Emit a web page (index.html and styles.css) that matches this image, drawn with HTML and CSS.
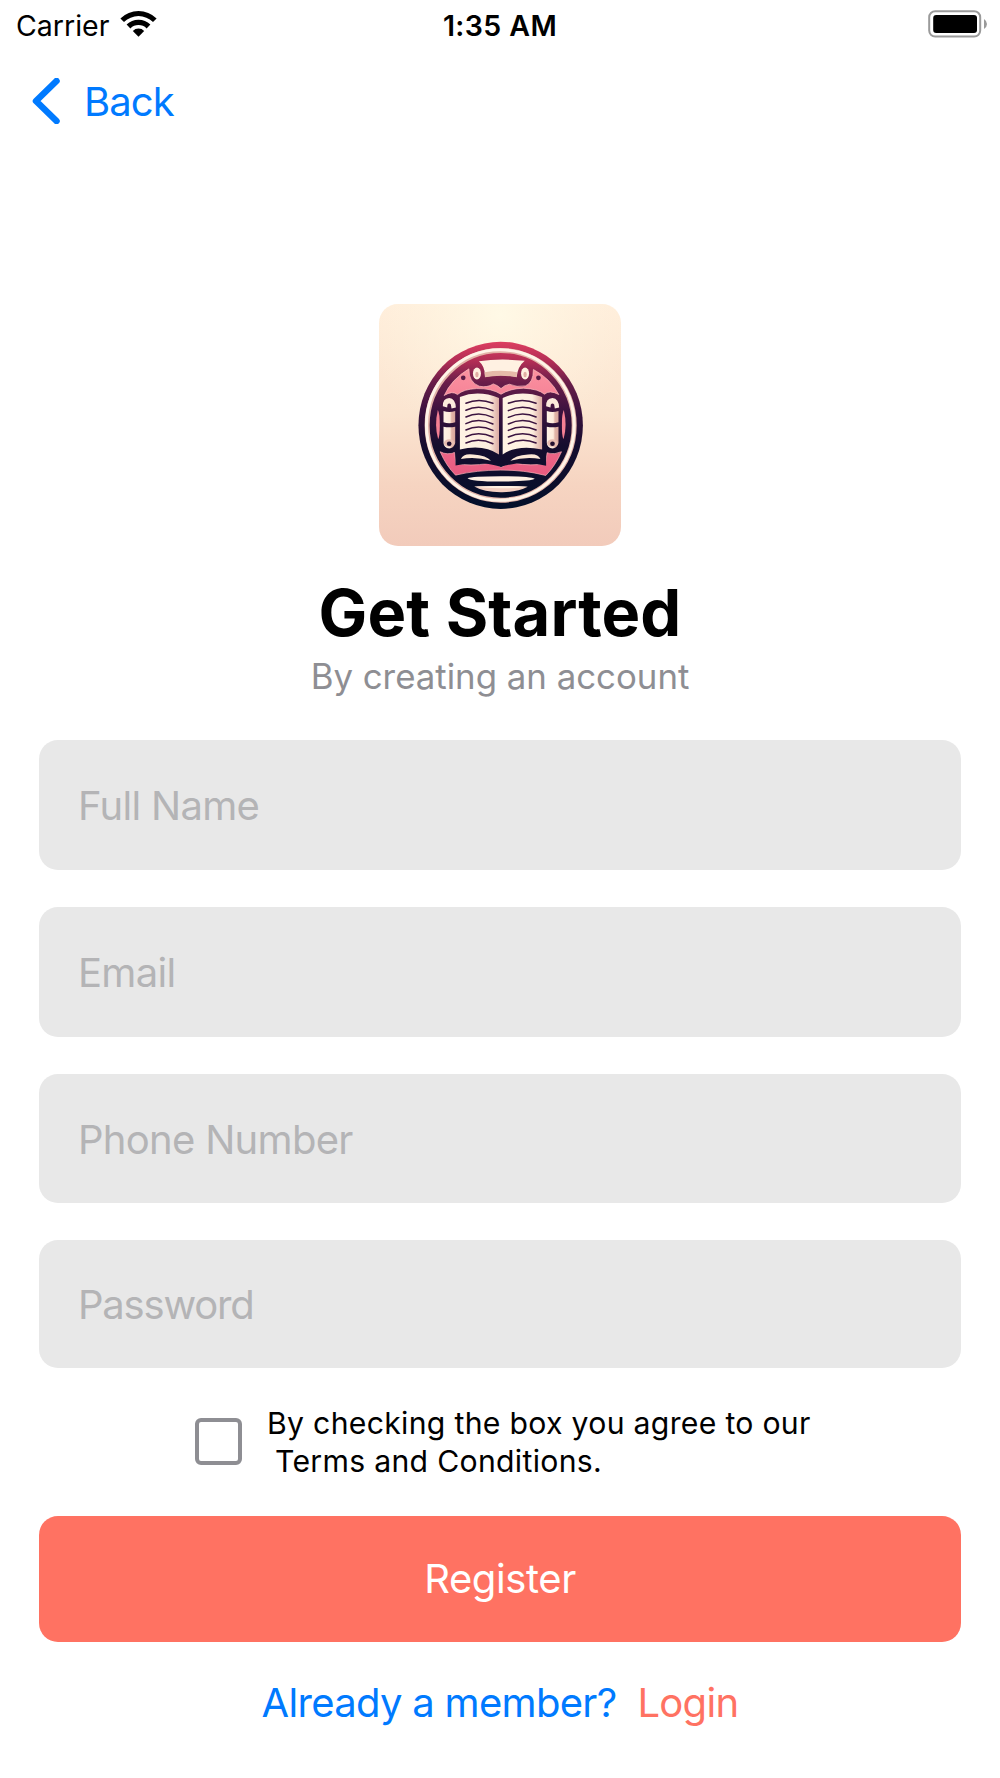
FILE: index.html
```
<!DOCTYPE html>
<html lang="en">
<head>
    <meta charset="UTF-8">
    <meta name="viewport" content="width=device-width, initial-scale=1.0">
    <title>Get Started</title>
    <link rel="stylesheet" href="styles.css">
</head>
<body>
    <div class="status-bar">
        <div class="status-left">
            <span class="carrier">Carrier</span>
            <svg class="wifi" viewBox="0 0 37 27">
                <path d="M0.4 8.4 A26 26 0 0 1 36.6 8.4 L33 12 A20.8 20.8 0 0 0 4 12 Z"/>
                <path d="M6.6 14.6 A17 17 0 0 1 30.4 14.6 L26.6 18.4 A11.6 11.6 0 0 0 10.4 18.4 Z"/>
                <path d="M12.8 21 A8 8 0 0 1 24.2 21 L18.5 26.8 Z"/>
            </svg>
        </div>
        <span class="time">1:35 AM</span>
        <svg class="battery" viewBox="0 0 60 28">
            <rect x="1.2" y="1.2" width="51" height="25.4" rx="6" fill="none" stroke="#9a9a9a" stroke-width="2"/>
            <rect x="5.2" y="5" width="43.8" height="18" rx="3" fill="#000"/>
            <path d="M56 9 Q59 11 59 14 Q59 17 56 19 Z" fill="#9a9a9a"/>
        </svg>
    </div>

    <div class="nav-bar">
        <svg class="chevron" viewBox="0 0 28 46">
            <path d="M24.5 3 L4 23 L24.5 43" fill="none" stroke="#007aff" stroke-width="6.5" stroke-linecap="round" stroke-linejoin="round"/>
        </svg>
        <a class="back">Back</a>
    </div>

    <div class="header">
        <svg class="logo" viewBox="28 28 724 724">
            <defs>
                <linearGradient id="paper" x1="0" y1="0" x2="0" y2="1">
                    <stop offset="0" stop-color="#ffeedb"/>
                    <stop offset="0.45" stop-color="#fbe5d1"/>
                    <stop offset="0.75" stop-color="#f6d4c1"/>
                    <stop offset="1" stop-color="#f2cbbb"/>
                </linearGradient>
                <radialGradient id="glow" gradientUnits="userSpaceOnUse" cx="390" cy="60" r="400">
                    <stop offset="0" stop-color="#fff9e6"/>
                    <stop offset="1" stop-color="#fff3df" stop-opacity="0"/>
                </radialGradient>
                <linearGradient id="ink" gradientUnits="userSpaceOnUse" x1="0" y1="142" x2="0" y2="640">
                    <stop offset="0" stop-color="#dc3e60"/>
                    <stop offset="0.12" stop-color="#b02d55"/>
                    <stop offset="0.24" stop-color="#6a1d4a"/>
                    <stop offset="0.42" stop-color="#3a123e"/>
                    <stop offset="0.62" stop-color="#160d2e"/>
                    <stop offset="1" stop-color="#030f2a"/>
                </linearGradient>
                <linearGradient id="pink" gradientUnits="userSpaceOnUse" x1="0" y1="220" x2="0" y2="540">
                    <stop offset="0" stop-color="#fb92a0"/>
                    <stop offset="1" stop-color="#e85a80"/>
                </linearGradient>
                <linearGradient id="page" x1="0" y1="0" x2="1" y2="0">
                    <stop offset="0" stop-color="#fff3e4"/>
                    <stop offset="0.75" stop-color="#fdeedf"/>
                    <stop offset="1" stop-color="#dcaaa2"/>
                </linearGradient>
                <linearGradient id="roll" x1="0" y1="0" x2="1" y2="0">
                    <stop offset="0" stop-color="#fff3e6"/>
                    <stop offset="0.55" stop-color="#fdebdc"/>
                    <stop offset="0.7" stop-color="#e2b5a8"/>
                    <stop offset="1" stop-color="#d9a59c"/>
                </linearGradient>
            </defs>
            <rect x="28" y="28" width="724" height="724" fill="url(#paper)"/>
            <rect x="28" y="28" width="724" height="724" fill="url(#glow)"/>

            <!-- badge rings -->
            <ellipse cx="392" cy="391" rx="246" ry="250" fill="url(#ink)"/>
            <ellipse cx="392" cy="391" rx="220" ry="224" fill="none" stroke="#e3b3a8" stroke-width="15"/>
            <ellipse cx="391" cy="390" rx="221" ry="225" fill="none" stroke="#fff4e8" stroke-width="9"/>

            <!-- pink field -->
            <path d="M223 302 Q244 254 297 222 Q296 262 328 274 Q352 279 370 267 Q383 271 393 281 Q404 270 418 268 Q440 278 466 273 Q490 264 490 224 Q540 250 566 299 Q538 284 523 298 Q505 282 460 280 Q420 281 393 298 Q365 280 320 281 Q280 283 263 299 Q247 286 223 302 Z" fill="url(#pink)" stroke="#ffc3c2" stroke-width="2"/>
            <path d="M204 345 Q193 391 205 433 Q210 425 210 391 Q210 355 204 345 Z" fill="#f47f93"/>
            <path d="M581 345 Q592 391 580 433 Q575 425 575 391 Q575 355 581 345 Z" fill="#f47f93"/>
            <path d="M211 470 Q232 481 254 472 L258 505 Q300 514 355 505 Q380 506 393 517 Q406 506 430 504 Q485 514 526 505 L531 473 Q553 480 574 470 Q555 513 527 541 Q460 524 392 525 Q320 525 257 540 Q229 512 211 470 Z" fill="url(#pink)" stroke="#ffb3b9" stroke-width="2"/>
            <circle cx="280" cy="249" r="7" fill="#5a1a45"/>
            <circle cx="505" cy="249" r="7" fill="#5a1a45"/>

            <!-- top scroll -->
            <path d="M327 199 Q392 190 464 198 Q443 215 440 246 Q392 237 345 246 Q346 215 327 199 Z" fill="#fff1e2"/>
            <path d="M344 232 Q392 224 441 232 L440 247 Q392 238 345 247 Z" fill="#e6baa9"/>
            <ellipse cx="321" cy="236" rx="12" ry="18" fill="#fff0e0"/>
            <ellipse cx="465" cy="236" rx="12" ry="18" fill="#fff0e0"/>
            <ellipse cx="321" cy="239" rx="5" ry="8" fill="#e2ada3"/>
            <ellipse cx="465" cy="239" rx="5" ry="8" fill="#e2ada3"/>

            <!-- open book -->
            <path d="M257 306 Q320 276 393 306 Q470 276 527 306 L528 512 Q460 494 393 515 Q325 494 257 511 Z" fill="url(#ink)"/>
            <path d="M270 306 Q325 284 387 309 L387 478 Q340 446 270 463 Z" fill="url(#page)"/>
            <path d="M398 309 Q452 284 516 306 L516 463 Q440 448 398 478 Z" fill="url(#page)"/>
            <path d="M273 492 Q280 474 310 478 Q350 481 363 497 Q316 484 273 492 Z" fill="#fde8d7"/>
            <path d="M511 492 Q504 474 474 478 Q434 481 421 497 Q468 484 511 492 Z" fill="#fde8d7"/>
            <g fill="none" stroke="#3b1440" stroke-width="4.5" stroke-linecap="round">
                <path d="M288 325 Q326 308 369 325"/>
                <path d="M288 346 Q326 327 369 347"/>
                <path d="M288 366 Q326 347 369 367"/>
                <path d="M288 386 Q326 367 369 387"/>
                <path d="M288 405 Q326 387 369 406"/>
                <path d="M288 425 Q326 407 369 426"/>
                <path d="M288 444 Q326 427 369 446"/>
                <path d="M415 325 Q457 308 498 325"/>
                <path d="M415 347 Q457 327 498 346"/>
                <path d="M415 367 Q457 347 498 366"/>
                <path d="M415 387 Q457 367 498 386"/>
                <path d="M415 406 Q457 387 498 405"/>
                <path d="M415 426 Q457 407 498 425"/>
                <path d="M415 446 Q457 427 498 444"/>
            </g>

            <!-- side scrolls -->
            <g id="side-scroll">
                <path d="M211 330 Q209 301 238 300 Q264 301 266 326 L264 452 Q260 473 238 474 Q214 473 211 450 Z" fill="url(#ink)"/>
                <path d="M219 334 Q218 310 238 309 Q257 311 258 338 L245 341 L243 329 Q238 323 233 329 L232 338 Z" fill="#fdebdc"/>
                <path d="M221 348 Q238 354 256 348 L256 382 Q238 387 221 382 Z" fill="url(#roll)"/>
                <path d="M221 395 Q238 399 256 395 L256 444 Q252 460 238 460 Q222 459 221 444 Z" fill="url(#roll)"/>
                <ellipse cx="238" cy="444" rx="16" ry="11" fill="#e8bdb1"/>
                <circle cx="238" cy="446" r="7" fill="#23102f"/>
            </g>
            <use href="#side-scroll" x="309"/>

            <!-- base lines -->
            <path d="M293 549 Q305 543 392 543 Q482 543 494 551 Q484 559 392 559 Q302 559 293 549 Z" fill="#fff0e2"/>
            <path d="M313 574 Q392 570 473 575 Q440 592 392 591 Q342 591 313 574 Z" fill="#f4cfc1"/>
            <path d="M313 574 Q392 570 473 575 Q440 580 392 579 Q342 579 313 574 Z" fill="#fff0e2"/>
        </svg>
        <h1 class="title">Get Started</h1>
        <p class="subtitle">By creating an account</p>
    </div>

    <form class="form">
        <input class="field" type="text" placeholder="Full Name">
        <input class="field" type="email" placeholder="Email">
        <input class="field" type="tel" placeholder="Phone Number">
        <input class="field field-password" type="password" placeholder="Password">

        <label class="terms">
            <input class="checkbox" type="checkbox">
            <span class="terms-text">By checking the box you agree to our<br><span class="terms-link">Terms and Conditions.</span></span>
        </label>

        <button class="register" type="button">Register</button>
    </form>

    <div class="footer">
        <span class="member">Already a member?</span>
        <a class="login">Login</a>
    </div>
</body>
</html>
```

FILE: styles.css
```
* {
    box-sizing: border-box;
}
body {
    font-family: Inter, "Liberation Sans", sans-serif;
    margin: 0;
    padding: 0;
    height: 1778px;
    overflow: hidden;
    background-color: #fff;
    color: #000;
}
.status-bar {
    display: grid;
    grid-template-columns: 1fr auto 1fr;
    align-items: center;
    height: 50px;
    padding: 0 12px;
    font-size: 28.5px;
}
.status-left {
    display: flex;
    align-items: center;
    gap: 11px;
    padding-left: 4px;
}
.wifi {
    width: 37px;
    height: 27px;
    margin-bottom: 4px;
}
.time {
    font-weight: 600;
    letter-spacing: 0.4px;
}
.battery {
    justify-self: end;
    width: 60px;
    height: 28px;
    margin-bottom: 2px;
}
.nav-bar {
    display: flex;
    align-items: center;
    height: 102px;
    padding-left: 32px;
    gap: 24px;
}
.chevron {
    width: 28px;
    height: 46px;
}
.back {
    font-size: 40px;
    letter-spacing: -0.9px;
    color: #007aff;
}
.header {
    display: flex;
    flex-direction: column;
    align-items: center;
    padding-top: 152px;
}
.logo {
    width: 242px;
    height: 242px;
    border-radius: 19px;
}
.title {
    margin: 27px 0 0;
    font-size: 65px;
    font-weight: 700;
    line-height: 80px;
    letter-spacing: 0.1px;
}
.subtitle {
    margin: 2px 0 0;
    font-size: 34.8px;
    line-height: 42px;
    color: #8e8e93;
}
.form {
    display: flex;
    flex-direction: column;
    gap: 36.9px;
    margin-top: 43px;
    padding: 0 39px;
}
.field {
    width: 100%;
    height: 129.9px;
    padding: 1px 39px 0;
    border: none;
    border-radius: 19px;
    background-color: #e8e8e8;
    font-family: inherit;
    font-size: 40px;
    letter-spacing: -0.7px;
}
.field::placeholder {
    color: #b4b4b6;
}
.field-password {
    height: 127.6px;
    padding-top: 0;
    letter-spacing: -1.2px;
}
.terms {
    display: flex;
    align-items: center;
    gap: 25px;
    height: 74px;
    padding-left: 156px;
}
.checkbox {
    appearance: none;
    width: 47px;
    height: 47px;
    margin: 0;
    border: 4px solid #8e8e93;
    border-radius: 6px;
}
.terms-text {
    font-size: 30.2px;
    line-height: 38px;
    letter-spacing: 0.3px;
}
.terms-link {
    margin-left: 8px;
}
.register {
    height: 126.5px;
    border: none;
    border-radius: 19px;
    background-color: #ff7262;
    font-family: inherit;
    font-size: 40px;
    letter-spacing: -0.4px;
    color: #fff;
}
.footer {
    display: flex;
    justify-content: center;
    gap: 21px;
    margin-top: 36px;
    font-size: 40px;
    line-height: 50px;
    letter-spacing: -0.7px;
}
.member {
    color: #007aff;
}
.login {
    color: #ff7262;
}
```
